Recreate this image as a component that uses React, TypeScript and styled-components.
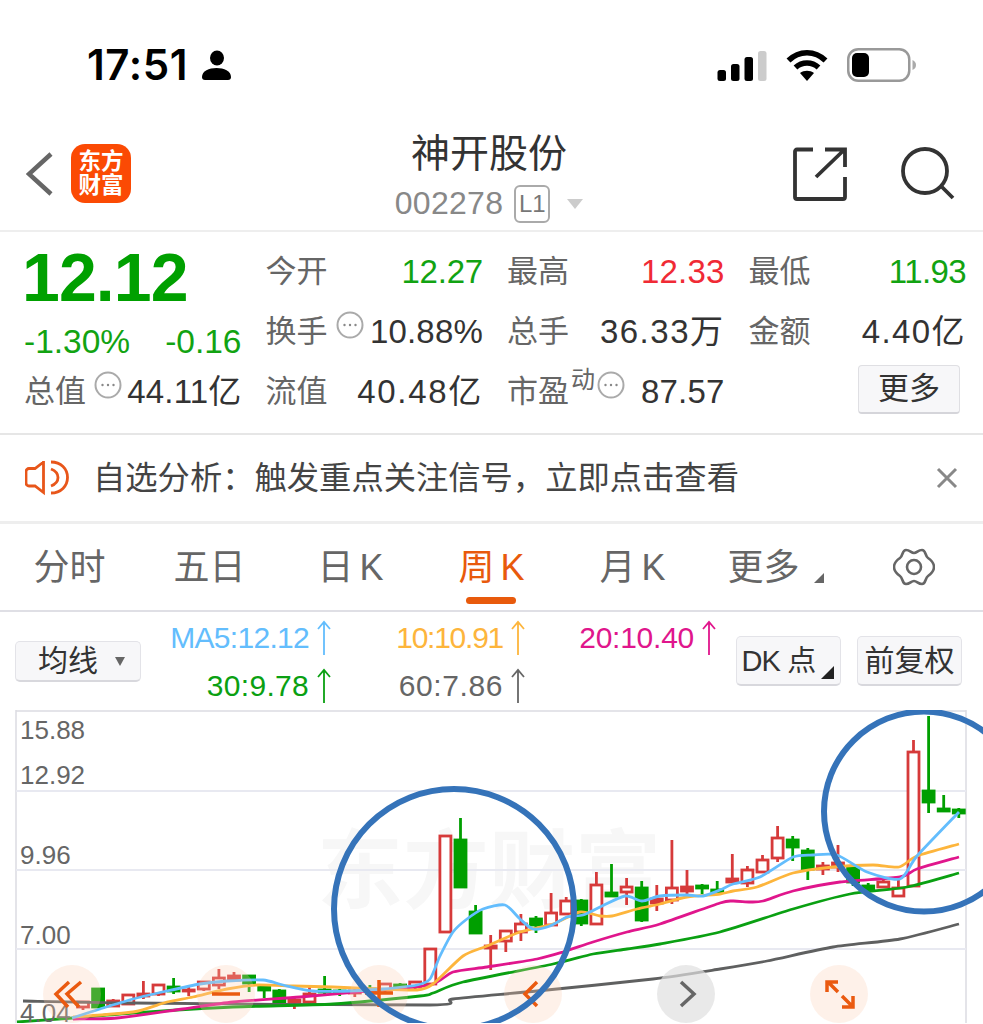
import React from "react";
import styled, { createGlobalStyle } from "styled-components";

const GlobalStyle = createGlobalStyle`
  html, body { margin: 0; padding: 0; background: #fff; }
  body {
    width: 983px;
    height: 1024px;
    overflow: hidden;
    font-family: "Liberation Sans", "Noto Sans CJK SC", sans-serif;
  }
`;

const CJK = `"Liberation Sans", "Noto Sans CJK SC", sans-serif`;

type Candle = [string, number, number, number, number];

// colour, high, body top, body bottom, low
const candles: Candle[] = [
  ["r", 1002, 1003, 1008, 1011],
  ["g", 990, 990, 1008, 1008],
  ["r", 1000, 1002, 1007, 1008],
  ["r", 996, 996, 1005, 1006],
  ["R", 982, 995, 997, 1000],
  ["r", 985, 986, 995, 997],
  ["G", 979, 988, 992, 995],
  ["r", 987, 991, 992, 997],
  ["r", 982, 983, 990, 992],
  ["r", 970, 979, 986, 990],
  ["R", 973, 977, 981, 983],
  ["G", 976, 977, 984, 993],
  ["G", 988, 988, 991, 999],
  ["G", 990, 992, 1003, 1005],
  ["R", 998, 1001, 1003, 1010],
  ["r", 988, 995, 1003, 1006],
  ["G", 977, 991, 993, 996],
  ["G", 990, 992, 993, 997],
  ["r", 988, 992, 994, 998],
  ["G", 986, 990, 992, 996],
  ["r", 984, 985, 991, 993],
  ["G", 984, 986, 988, 992],
  ["r", 982, 983, 988, 990],
  ["r", 950, 950, 985, 986],
  ["r", 837, 837, 933, 934],
  ["G", 819, 841, 888, 888],
  ["G", 906, 913, 934, 935],
  ["R", 936, 947, 949, 971],
  ["r", 932, 932, 942, 953],
  ["r", 915, 925, 933, 942],
  ["G", 917, 920, 926, 934],
  ["r", 894, 914, 926, 927],
  ["r", 898, 902, 915, 916],
  ["G", 900, 902, 924, 927],
  ["r", 873, 886, 925, 926],
  ["G", 865, 894, 897, 897],
  ["r", 879, 888, 893, 906],
  ["G", 882, 889, 921, 923],
  ["R", 886, 900, 904, 912],
  ["r", 841, 889, 901, 905],
  ["R", 871, 888, 892, 895],
  ["G", 885, 887, 889, 895],
  ["G", 882, 891, 893, 895],
  ["R", 855, 880, 883, 883],
  ["r", 867, 871, 884, 888],
  ["r", 856, 861, 873, 874],
  ["r", 827, 839, 859, 863],
  ["G", 837, 841, 848, 862],
  ["G", 849, 852, 870, 881],
  ["R", 863, 867, 870, 876],
  ["R", 846, 864, 868, 873],
  ["G", 866, 869, 883, 887],
  ["G", 884, 887, 890, 893],
  ["r", 880, 883, 888, 889],
  ["r", 877, 889, 897, 897],
  ["r", 741, 753, 887, 887],
  ["G", 717, 792, 803, 814],
  ["G", 796, 810, 812, 812],
  ["G", 809, 811, 814, 819],
];

const maLines: [string, string][] = [
  [
    "#5f6060",
    "23,1002 133,1004 430,1006 453,1000 537,992 653,980 720,970 767,962 833,948 900,940 959,925",
  ],
  [
    "#0aa012",
    "17,1023 73,1019 133,1014 233,1008 333,1005 420,997 433,994 463,983 553,965 593,955 627,950 660,945 720,933 793,910 850,895 907,888 959,874",
  ],
  [
    "#e0168c",
    "73,1020 117,1019 183,1010 233,1003 300,998 367,992 430,986 453,973 487,968 537,960 563,953 593,943 627,933 660,925 720,904 733,902 750,903 763,902 793,892 840,883 900,878 917,870 959,858",
  ],
  [
    "#fdb53c",
    "73,1018 133,1013 167,1003 193,998 227,990 257,986 293,987 333,988 377,990 417,991 433,985 463,957 487,947 520,933 553,925 580,913 600,917 612,917 637,910 660,905 687,898 720,895 733,892 757,888 793,874 833,868 873,866 899,868 917,857 959,845",
  ],
  [
    "#63bdfd",
    "72,1019 100,1010 133,1000 167,992 200,985 227,982 263,981 283,986 313,992 350,992 383,990 417,986 430,980 440,957 453,933 467,920 483,910 505,906 520,920 533,930 550,927 567,918 583,916 600,908 625,897 642,902 660,897 687,896 703,897 720,891 733,885 760,878 793,858 813,856 837,856 867,873 900,880 917,857 959,813",
  ],
];

// turns "x,y x,y" into a softly rounded path
const smoothPath = (points: string) => {
  const p = points.split(" ").map((s) => s.split(",").map(Number));
  let d = `M${p[0][0]} ${p[0][1]}`;
  for (let i = 0; i < p.length - 1; i++) {
    const a = p[Math.max(i - 1, 0)];
    const b = p[i];
    const c = p[i + 1];
    const e = p[Math.min(i + 2, p.length - 1)];
    const t = 0.12;
    d += `C${b[0] + (c[0] - a[0]) * t} ${b[1] + (c[1] - a[1]) * t} ${
      c[0] - (e[0] - b[0]) * t
    } ${c[1] - (e[1] - b[1]) * t} ${c[0]} ${c[1]}`;
  }
  return d;
};

const Page = styled.div`
  width: 983px;
  height: 1024px;
  overflow: hidden;
  color: #333;
  display: flex;
  flex-direction: column;
`;

const StatusBar = styled.div`
  height: 130px;
  flex: none;
  box-sizing: border-box;
  padding: 40px 66px 0 87px;
  display: flex;
  justify-content: space-between;
  align-items: flex-start;
`;

const StatusLeft = styled.div`
  display: flex;
  align-items: center;
  gap: 14px;
`;

const Clock = styled.span`
  font-family: Inter, sans-serif;
  font-size: 42px;
  line-height: 50px;
  font-weight: 600;
  letter-spacing: 0.6px;
  color: #000;
`;

const StatusRight = styled.div`
  display: flex;
  align-items: center;
  gap: 19px;
  height: 50px;
`;

const Nav = styled.div`
  height: 102px;
  flex: none;
  box-sizing: border-box;
  border-bottom: 2px solid #eee;
  padding: 0 28px 0 26px;
  display: grid;
  grid-template-columns: 1fr auto 1fr;
  align-items: center;
`;

const NavLeft = styled.div`
  display: flex;
  align-items: center;
  gap: 18px;
  margin-top: -13px;
`;

const Logo = styled.div`
  width: 60px;
  height: 59px;
  border-radius: 14px;
  background: #fb4a04;
  color: #fff;
  font-family: ${CJK};
  font-size: 22.5px;
  line-height: 24px;
  font-weight: 700;
  text-align: center;
  display: flex;
  flex-direction: column;
  justify-content: center;
`;

const NavCenter = styled.div`
  display: flex;
  flex-direction: column;
  align-items: center;
  margin: -5px 0 0 -3px;
`;

const Title = styled.div`
  font-family: ${CJK};
  font-size: 39px;
  line-height: 48px;
  color: #333;
`;

const CodeRow = styled.div`
  display: flex;
  align-items: center;
  gap: 11px;
  height: 44px;
  margin-top: 4px;
`;

const Code = styled.span`
  font-size: 32px;
  letter-spacing: 0.3px;
  color: #888;
`;

const LevelBadge = styled.span`
  box-sizing: border-box;
  width: 36px;
  height: 38px;
  border: 2px solid #aaa;
  border-radius: 6px;
  font-size: 24px;
  line-height: 34px;
  color: #777;
  text-align: center;
`;

const DownMark = styled.span`
  margin-left: 6px;
  width: 0;
  height: 0;
  border-left: 8px solid transparent;
  border-right: 8px solid transparent;
  border-top: 10px solid #ccc;
`;

const NavRight = styled.div`
  display: flex;
  justify-content: flex-end;
  align-items: center;
  gap: 54px;
  margin-top: -12px;
`;

const Quote = styled.div`
  height: 203px;
  flex: none;
  box-sizing: border-box;
  border-bottom: 2px solid #e6e6e6;
  padding: 10px 17px 0 24px;
  display: grid;
  grid-template-columns: repeat(4, 1fr);
  grid-auto-rows: 60px;
  column-gap: 24px;
`;

const BigPrice = styled.div`
  font-size: 68px;
  line-height: 70px;
  font-weight: 700;
  color: #00a000;
  letter-spacing: -0.9px;
  margin-left: -2px;
`;

const ChangeRow = styled.div`
  display: flex;
  justify-content: space-between;
  align-items: flex-end;
  height: 60px;
  font-size: 33.5px;
  line-height: 36px;
  color: #12a312;
  margin-top: -2px;
`;

const Cell = styled.div`
  display: flex;
  justify-content: space-between;
  align-items: center;
  white-space: nowrap;
`;

const Label = styled.span`
  display: flex;
  align-items: flex-start;
  font-family: ${CJK};
  font-size: 31px;
  line-height: 44px;
  color: #666;
`;

const Sup = styled.span`
  font-size: 24px;
  line-height: 26px;
  margin-top: -3px;
  margin-left: 2px;
`;

type Tone = "green" | "red" | "dark";
const toneColor: Record<Tone, string> = {
  green: "#12a312",
  red: "#f02a35",
  dark: "#333",
};

const Value = styled.span<{ $tone?: Tone; $spacing?: number }>`
  font-family: ${CJK};
  font-size: 33px;
  line-height: 44px;
  letter-spacing: ${(p) => p.$spacing ?? 0.2}px;
  color: ${(p) => toneColor[p.$tone || "dark"]};
`;

const DotIcon = styled.svg`
  width: 28px;
  height: 28px;
  margin: 1px 0 0 8px;
  flex: none;
`;

const SupDot = styled(DotIcon)`
  margin-left: 2px;
`;

const MoreButton = styled.button`
  box-sizing: border-box;
  width: 102px;
  height: 49px;
  margin: -5px 6px 0 auto;
  padding: 0;
  background: #f7f7f9;
  border: 1px solid #dfdfe3;
  border-bottom: 2px solid #d5d5da;
  border-radius: 4px;
  font-family: ${CJK};
  font-size: 31px;
  line-height: 42px;
  color: #333;
`;

const Notice = styled.div`
  height: 89px;
  flex: none;
  box-sizing: border-box;
  border-bottom: 3px solid #eee;
  padding: 0 25px 0 25px;
  display: flex;
  align-items: center;
`;

const NoticeText = styled.span`
  margin-left: 24px;
  font-family: ${CJK};
  font-size: 32.3px;
  line-height: 44px;
  color: #444;
  flex: 1;
`;

const Tabs = styled.div`
  height: 88px;
  flex: none;
  box-sizing: border-box;
  border-bottom: 2px solid #dfdfe5;
  display: grid;
  grid-template-columns: 139px repeat(5, 141px) 139px;
`;

const Tab = styled.div<{ $active?: boolean }>`
  position: relative;
  display: flex;
  justify-content: center;
  align-items: flex-start;
  padding-top: 21px;
  font-family: ${CJK};
  font-size: 36px;
  line-height: 46px;
  color: ${(p) => (p.$active ? "#e85a0c" : "#666")};

  ${(p) =>
    p.$active &&
    `&::after {
      content: "";
      position: absolute;
      left: 45px;
      bottom: 6px;
      width: 50px;
      height: 7px;
      border-radius: 4px;
      background: #e85a0c;
    }`}
`;

const TabK = styled.span`
  margin-left: 6px;
`;

const TabMore = styled.span`
  margin-right: 20px;
`;

const TabCorner = styled.span`
  position: absolute;
  left: 111px;
  top: 49px;
  width: 0;
  height: 0;
  border-left: 10px solid transparent;
  border-bottom: 10px solid #666;
`;

const GearIcon = styled.svg`
  width: 42px;
  height: 38px;
  margin-top: 3px;
  fill: none;
  stroke: #666;
  stroke-width: 2.6;
  stroke-linejoin: round;
`;

const MaRow = styled.div`
  height: 98px;
  flex: none;
  box-sizing: border-box;
  padding: 2px 21px 0 15px;
  display: flex;
  align-items: flex-start;
`;

const Select = styled.div`
  box-sizing: border-box;
  width: 126px;
  height: 41px;
  margin-top: 27px;
  padding-left: 22px;
  background: #f7f7f9;
  border: 1px solid #e3e3e8;
  border-bottom: 2px solid #d8d8dd;
  border-radius: 5px;
  display: flex;
  align-items: center;
  font-family: ${CJK};
  font-size: 30px;
  line-height: 38px;
  color: #333;
`;

const SelectMark = styled.span`
  margin-left: 17px;
  width: 0;
  height: 0;
  border-left: 5px solid transparent;
  border-right: 5px solid transparent;
  border-top: 9px solid #666;
`;

const MaGrid = styled.div`
  width: 577px;
  display: grid;
  grid-template-columns: 192px 194px 191px;
  grid-auto-rows: 48px;
`;

const MaValue = styled.div<{ $color: string; $spacing: number }>`
  display: flex;
  justify-content: flex-end;
  align-items: center;
  gap: 6px;
  font-size: 30px;
  white-space: nowrap;
  letter-spacing: ${(p) => p.$spacing}px;
  color: ${(p) => p.$color};
`;

const MaButtons = styled.div`
  margin-left: auto;
  margin-top: 22px;
  display: flex;
  gap: 16px;
`;

const ChipButton = styled.div`
  position: relative;
  box-sizing: border-box;
  width: 105px;
  height: 50px;
  background: #f7f7f9;
  border: 1px solid #e3e3e8;
  border-bottom: 2px solid #d8d8dd;
  border-radius: 5px;
  display: flex;
  justify-content: center;
  align-items: center;
  font-family: ${CJK};
  font-size: 30px;
  line-height: 40px;
  color: #333;
  white-space: nowrap;
`;

const ChipLabel = styled.span`
  margin-right: 20px;
  font-size: 29px;
  letter-spacing: -0.8px;
`;

const ChipCorner = styled.span`
  position: absolute;
  right: 6px;
  bottom: 5px;
  width: 0;
  height: 0;
  border-left: 13px solid transparent;
  border-bottom: 13px solid #222;
`;

const Chart = styled.div`
  position: relative;
  flex: 1;
  min-height: 0;
`;

const Watermark = styled.div`
  position: absolute;
  left: 317px;
  top: 112px;
  font-family: ${CJK};
  font-size: 86px;
  line-height: 100px;
  font-weight: 700;
  color: #f7f7f7;
  white-space: nowrap;
`;

const ChartSvg = styled.svg`
  position: absolute;
  left: 0;
  top: 0;
  display: block;
`;

const AxisLabel = styled.span<{ $top: number }>`
  position: absolute;
  left: 20px;
  top: ${(p) => p.$top}px;
  font-size: 26px;
  line-height: 20px;
  color: #666;
`;

const RoundButton = styled.div<{ $center: number; $muted?: boolean }>`
  position: absolute;
  left: ${(p) => p.$center - 29}px;
  top: 255px;
  width: 58px;
  height: 58px;
  border-radius: 50%;
  background: ${(p) =>
    p.$muted ? "rgba(224,224,224,.7)" : "rgba(250,205,175,.28)"};
`;

const RoundIcon = styled.svg`
  display: block;
  width: 58px;
  height: 58px;
  fill: none;
  stroke: ${(p) => p.stroke || "#ea5a10"};
  stroke-width: 3.5;
`;

const InfoMark = () => (
  <>
    <circle cx="14" cy="14" r="12.5" fill="#fff" stroke="#aaa" strokeWidth="2" />
    <circle cx="8.5" cy="14" r="1.2" fill="#888" />
    <circle cx="14" cy="14" r="1.2" fill="#888" />
    <circle cx="19.5" cy="14" r="1.2" fill="#888" />
  </>
);

const InfoDot = () => (
  <DotIcon viewBox="0 0 28 28">
    <InfoMark />
  </DotIcon>
);

const UpArrow = ({ color }: { color: string }) => (
  <svg width="18" height="36" viewBox="0 0 18 36" fill="none" stroke={color} strokeWidth="1.8">
    <path d="M9 35V2M3 9l6-7 6 7" />
  </svg>
);

const MaItem = ({
  color,
  text,
  spacing,
}: {
  color: string;
  text: string;
  spacing: number;
}) => (
  <MaValue $color={color} $spacing={spacing}>
    {text}
    <UpArrow color={color} />
  </MaValue>
);

const Candles = () => (
  <>
    {candles.map(([kind, hi, top, bot, lo], i) => {
      const x = 83 + i * 15.1;
      const isRed = kind === "r" || kind === "R";
      const color = isRed ? "#d63a3a" : "#009f00";
      const filled = kind !== "r";
      return (
        <g key={i} stroke={color} strokeWidth="2.8">
          <path d={`M${x} ${hi}V${lo}`} />
          <rect
            x={x - 5.5}
            y={top}
            width={11}
            height={Math.max(bot - top, 1)}
            fill={filled ? color : "#fff"}
          />
        </g>
      );
    })}
  </>
);

export default function App() {
  return (
    <Page>
      <GlobalStyle />
      <StatusBar>
        <StatusLeft>
          <Clock>17:51</Clock>
          <svg width="29" height="30" viewBox="0 0 29 30" fill="#000">
            <ellipse cx="15" cy="8" rx="7" ry="7.500" />
            <path d="M0 27C0 21 7 18 14.500 18S29 21 29 27C29 29 28 30 26 30H3C1 30 0 29 0 27Z" />
          </svg>
        </StatusLeft>
        <StatusRight>
          <svg width="50" height="32" viewBox="0 0 50 32">
            <rect x="0.500" y="21" width="8.500" height="11" rx="2.500" fill="#000" />
            <rect x="14" y="15" width="8.500" height="17" rx="2.500" fill="#000" />
            <rect x="27.500" y="8" width="8.500" height="24" rx="2.500" fill="#000" />
            <rect x="41" y="2" width="8.500" height="30" rx="2.500" fill="#ccc" />
          </svg>
          <svg width="42" height="32" viewBox="0 0 42 32" fill="none" stroke="#000" strokeWidth="5.500">
            <path d="M2.500 11.500C13 1 29 1 39.500 11.500" />
            <path d="M9.500 18.500c6.500-6 16.500-6 23 0" />
            <path d="M21 32l-7-8c4-3 10-3 14 0z" fill="#000" stroke="none" />
          </svg>
          <svg width="70" height="34" viewBox="0 0 70 34">
            <rect x="1.250" y="1.250" width="61" height="31.500" rx="10" fill="none" stroke="#999" strokeWidth="2.500" />
            <rect x="5" y="5" width="17" height="24" rx="5" fill="#000" />
            <path d="M65.500 12c2.500 1 3.500 3 3.500 5s-1 4-3.500 5z" fill="#aaa" />
          </svg>
        </StatusRight>
      </StatusBar>

      <Nav>
        <NavLeft>
          <svg width="27" height="44" viewBox="0 0 27 44" fill="none" stroke="#666" strokeWidth="4.500">
            <path d="M25 2L3 22l22 20" />
          </svg>
          <Logo>
            <span>东方</span>
            <span>财富</span>
          </Logo>
        </NavLeft>
        <NavCenter>
          <Title>神开股份</Title>
          <CodeRow>
            <Code>002278</Code>
            <LevelBadge>L1</LevelBadge>
            <DownMark />
          </CodeRow>
        </NavCenter>
        <NavRight>
          <svg width="54" height="54" viewBox="0 0 54 54" fill="none" stroke="#333" strokeWidth="3.800">
            <path d="M20 2.500H4a2 2 0 0 0-2 2V50a2 2 0 0 0 2 2H50a2 2 0 0 0 2-2V30" />
            <path d="M23 30L51 3M32 2.500H52V20" />
          </svg>
          <svg width="54" height="54" viewBox="0 0 54 54" fill="none" stroke="#333" strokeWidth="3.800">
            <circle cx="24" cy="24" r="22" />
            <path d="M41 40l11 11" />
          </svg>
        </NavRight>
      </Nav>

      <Quote>
        <BigPrice>12.12</BigPrice>
        <Cell>
          <Label>今开</Label>
          <Value $tone="green" $spacing={-0.2}>
            12.27
          </Value>
        </Cell>
        <Cell>
          <Label>最高</Label>
          <Value $tone="red">12.33</Value>
        </Cell>
        <Cell>
          <Label>最低</Label>
          <Value $tone="green" $spacing={-0.6}>
            11.93
          </Value>
        </Cell>

        <ChangeRow>
          <span>-1.30%</span>
          <span>-0.16</span>
        </ChangeRow>
        <Cell>
          <Label>
            换手
            <InfoDot />
          </Label>
          <Value>10.88%</Value>
        </Cell>
        <Cell>
          <Label>总手</Label>
          <Value $spacing={1.5}>36.33万</Value>
        </Cell>
        <Cell>
          <Label>金额</Label>
          <Value $spacing={1.4}>4.40亿</Value>
        </Cell>

        <Cell>
          <Label>
            总值
            <InfoDot />
          </Label>
          <Value>44.11亿</Value>
        </Cell>
        <Cell>
          <Label>流值</Label>
          <Value $spacing={1.7}>40.48亿</Value>
        </Cell>
        <Cell>
          <Label>
            市盈
            <Sup>动</Sup>
            <SupDot viewBox="0 0 28 28">
              <InfoMark />
            </SupDot>
          </Label>
          <Value>87.57</Value>
        </Cell>
        <Cell>
          <MoreButton>更多</MoreButton>
        </Cell>
      </Quote>

      <Notice>
        <svg width="44" height="38" viewBox="0 0 44 38" fill="none" stroke="#e8561a" strokeWidth="2.800">
          <path d="M18.500 3L10 9.500H4a3 3 0 0 0-3 3V24a3 3 0 0 0 3 3h6l8.500 6.500V2" />
          <path d="M26 10C31 12 33 15 33 18.500S31 25 26 27" />
          <path d="M26 3C36 3 42.500 10 42.500 18.500S36 34 26 34" />
        </svg>
        <NoticeText>自选分析：触发重点关注信号，立即点击查看</NoticeText>
        <svg width="22" height="22" viewBox="0 0 22 22" stroke="#888" strokeWidth="3">
          <path d="M2 2l18 18M20 2L2 20" />
        </svg>
      </Notice>

      <Tabs>
        <Tab>分时</Tab>
        <Tab>五日</Tab>
        <Tab>
          日<TabK>K</TabK>
        </Tab>
        <Tab $active>
          周<TabK>K</TabK>
        </Tab>
        <Tab>
          月<TabK>K</TabK>
        </Tab>
        <Tab>
          <TabMore>更多</TabMore>
          <TabCorner />
        </Tab>
        <Tab>
          <GearIcon viewBox="0 0 42 38">
            <path d="M21 5C24 5 25 2 29 2C33 2 32 8 35 10C38 12 41 15 41 19C41 23 38 26 35 28C32 30 33 36 29 36C25 36 24 33 21 33C18 33 17 36 13 36C9 36 10 30 7 28C4 26 1 23 1 19C1 15 4 12 7 10C10 8 9 2 13 2C17 2 18 5 21 5Z" />
            <circle cx="21" cy="19" r="7" />
          </GearIcon>
        </Tab>
      </Tabs>

      <MaRow>
        <Select>
          均线
          <SelectMark />
        </Select>
        <MaGrid>
          <MaItem color="#63bdfd" text="MA5:12.12" spacing={-0.7} />
          <MaItem color="#fdb53c" text="10:10.91" spacing={-1.25} />
          <MaItem color="#e0168c" text="20:10.40" spacing={-0.25} />
          <MaItem color="#0aa012" text="30:9.78" spacing={0.3} />
          <MaItem color="#666" text="60:7.86" spacing={0.6} />
        </MaGrid>
        <MaButtons>
          <ChipButton>
            <ChipLabel>DK 点</ChipLabel>
            <ChipCorner />
          </ChipButton>
          <ChipButton>前复权</ChipButton>
        </MaButtons>
      </MaRow>

      <Chart>
        <Watermark>东方财富</Watermark>
        <ChartSvg width="983" height="313" viewBox="0 711 983 313" fill="none">
          <path d="M16 712H966M16 711V1024M966 711V1024" stroke="#dcdce2" strokeWidth="1.500" />
          <path d="M16 792H966M16 871H966M16 950H966" stroke="#e8e9f1" strokeWidth="2" />
          <Candles />
          {maLines.map(([color, points]) => (
            <path
              key={color}
              d={smoothPath(points)}
              stroke={color}
              strokeWidth="2.800"
              strokeLinejoin="round"
            />
          ))}
        </ChartSvg>
        <AxisLabel $top={10}>15.88</AxisLabel>
        <AxisLabel $top={55}>12.92</AxisLabel>
        <AxisLabel $top={135}>9.96</AxisLabel>
        <AxisLabel $top={215}>7.00</AxisLabel>
        <AxisLabel $top={293}>4.04</AxisLabel>
        <RoundButton $center={72}>
          <RoundIcon viewBox="0 0 58 58">
            <path d="M26 17L13 29l12 13M38 17L24 29l12 13" />
          </RoundIcon>
        </RoundButton>
        <RoundButton $center={226}>
          <RoundIcon viewBox="0 0 58 58">
            <path d="M15 29H43" />
          </RoundIcon>
        </RoundButton>
        <RoundButton $center={379}>
          <RoundIcon viewBox="0 0 58 58">
            <path d="M15 28H43M29 15V42" />
          </RoundIcon>
        </RoundButton>
        <RoundButton $center={533}>
          <RoundIcon viewBox="0 0 58 58">
            <path d="M33 17L21 29l12 12" />
          </RoundIcon>
        </RoundButton>
        <RoundButton $center={686} $muted>
          <RoundIcon viewBox="0 0 58 58" stroke="#666">
            <path d="M24 17l13 12-13 12" />
          </RoundIcon>
        </RoundButton>
        <RoundButton $center={839}>
          <RoundIcon viewBox="0 0 58 58">
            <path d="M18 17l10 10M17 27V17h11M43 42L32 31M43 31v11H32" />
          </RoundIcon>
        </RoundButton>
        <ChartSvg width="983" height="313" viewBox="0 711 983 313" fill="none">
          <circle cx="454" cy="910" r="120" stroke="#3573b9" strokeWidth="6" />
          <circle cx="924" cy="812.500" r="100" stroke="#3573b9" strokeWidth="6" />
        </ChartSvg>
      </Chart>
    </Page>
  );
}
